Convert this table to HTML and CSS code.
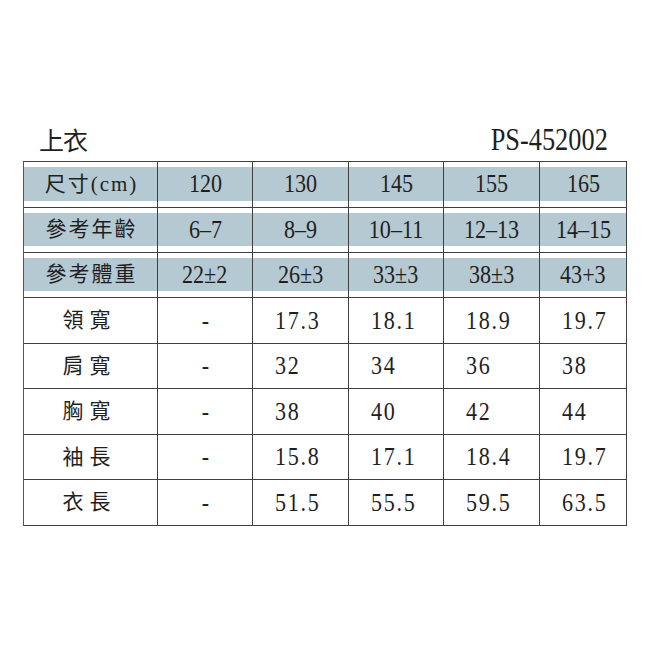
FILE: index.html
```html
<!DOCTYPE html>
<html lang="zh-Hant">
<head>
<meta charset="utf-8">
<title>上衣 尺寸表</title>
<link rel="stylesheet" href="styles.css">
</head>
<body>
<div class="page">
  <header class="head">
    <h1 class="title">上衣</h1>
    <div class="code"><span class="cond">PS-452002</span></div>
  </header>
  <div class="grid">
    <div class="cell band label"><span class="hlabel">尺寸(cm)</span></div>
    <div class="cell band"><span class="cond">120</span></div>
    <div class="cell band"><span class="cond">130</span></div>
    <div class="cell band"><span class="cond">145</span></div>
    <div class="cell band"><span class="cond">155</span></div>
    <div class="cell band"><span class="cond">165</span></div>

    <div class="cell band label"><span class="hlabel">參考年齡</span></div>
    <div class="cell band"><span class="cond">6–7</span></div>
    <div class="cell band"><span class="cond">8–9</span></div>
    <div class="cell band"><span class="cond">10–11</span></div>
    <div class="cell band"><span class="cond">12–13</span></div>
    <div class="cell band"><span class="cond">14–15</span></div>

    <div class="cell band label"><span class="hlabel">參考體重</span></div>
    <div class="cell band"><span class="cond">22±2</span></div>
    <div class="cell band"><span class="cond">26±3</span></div>
    <div class="cell band"><span class="cond">33±3</span></div>
    <div class="cell band"><span class="cond">38±3</span></div>
    <div class="cell band"><span class="cond">43+3</span></div>

    <div class="cell label"><span class="blabel">領寬</span></div>
    <div class="cell"><span class="cond">-</span></div>
    <div class="cell left"><span class="cond val">17.3</span></div>
    <div class="cell left"><span class="cond val">18.1</span></div>
    <div class="cell left"><span class="cond val">18.9</span></div>
    <div class="cell left"><span class="cond val">19.7</span></div>

    <div class="cell label"><span class="blabel">肩寬</span></div>
    <div class="cell"><span class="cond">-</span></div>
    <div class="cell left"><span class="cond val">32</span></div>
    <div class="cell left"><span class="cond val">34</span></div>
    <div class="cell left"><span class="cond val">36</span></div>
    <div class="cell left"><span class="cond val">38</span></div>

    <div class="cell label"><span class="blabel">胸寬</span></div>
    <div class="cell"><span class="cond">-</span></div>
    <div class="cell left"><span class="cond val">38</span></div>
    <div class="cell left"><span class="cond val">40</span></div>
    <div class="cell left"><span class="cond val">42</span></div>
    <div class="cell left"><span class="cond val">44</span></div>

    <div class="cell label"><span class="blabel">袖長</span></div>
    <div class="cell"><span class="cond">-</span></div>
    <div class="cell left"><span class="cond val">15.8</span></div>
    <div class="cell left"><span class="cond val">17.1</span></div>
    <div class="cell left"><span class="cond val">18.4</span></div>
    <div class="cell left"><span class="cond val">19.7</span></div>

    <div class="cell label"><span class="blabel">衣長</span></div>
    <div class="cell"><span class="cond">-</span></div>
    <div class="cell left"><span class="cond val">51.5</span></div>
    <div class="cell left"><span class="cond val">55.5</span></div>
    <div class="cell left"><span class="cond val">59.5</span></div>
    <div class="cell left"><span class="cond val">63.5</span></div>
  </div>
</div>
</body>
</html>
```

FILE: styles.css
```css
* { box-sizing: border-box; }

html, body {
  margin: 0;
  background: #ffffff;
}

body {
  font-family: "Liberation Serif", "Noto Sans CJK TC", serif;
  color: #1f1f1f;
}

.page {
  padding: 118px 0 0 23px;
  width: 650px;
}

.head {
  width: 604px;
  height: 43px;
  display: flex;
  justify-content: space-between;
  align-items: flex-end;
  padding: 0 19px 9px 16px;
}

.title {
  margin: 0;
  font-family: "Noto Sans CJK TC", sans-serif;
  font-weight: 400;
  font-size: 25px;
  line-height: 25px;
  letter-spacing: -1px;
}

.code {
  font-size: 31px;
  line-height: 24px;
}

.code .cond {
  transform-origin: right center;
}

.cond {
  display: inline-block;
  transform: scaleX(0.85);
  white-space: nowrap;
}

.grid {
  display: grid;
  width: 604px;
  grid-template-columns: 134px 95px 96px 95px 96px 87px;
  grid-template-rows: 46px 45px 45px 46px 45px 46px 45px 46px;
  border-top: 1px solid #404040;
  border-left: 1px solid #555;
}

.cell {
  border-right: 1px solid #404040;
  border-bottom: 1px solid #404040;
  display: flex;
  align-items: center;
  justify-content: center;
  font-size: 26px;
  line-height: 1;
}

.band {
  padding: 5px 0 6px;
  background-color: #b5c9d2;
  background-clip: content-box;
}

.left {
  justify-content: flex-start;
  padding-left: 22px;
}

.left .cond {
  transform-origin: left center;
}

.val {
  letter-spacing: 2px;
}

.hlabel {
  font-size: 21px;
  letter-spacing: 2px;
  margin-right: -2px;
}

.blabel {
  font-size: 21px;
  letter-spacing: 6px;
  margin-right: 2px;
}
```
